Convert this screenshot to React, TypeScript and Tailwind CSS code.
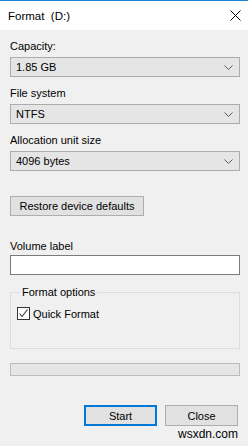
import React from 'react';

const font = { fontFamily: '"Liberation Sans", Arial, sans-serif' };

const Chevron: React.FC = () => (
  <svg width="9" height="5" viewBox="0 0 9 5" className="shrink-0">
    <path d="M0.5 0.5 L4.5 4.5 L8.5 0.5" fill="none" stroke="#5a5a5a" strokeWidth="1" />
  </svg>
);

const Combo: React.FC<{ value: string }> = ({ value }) => (
  <div className="flex items-center justify-between h-[20px] pl-[5px] pr-[6px] bg-[#e5e5e5] border border-[#acacac] text-black">
    <span>{value}</span>
    <Chevron />
  </div>
);

const Label: React.FC<{ children: React.ReactNode }> = ({ children }) => (
  <div className="h-[16px] leading-[16px] mb-[3px] text-black">{children}</div>
);

export default function App() {
  return (
    <div className="w-[248px] h-[446px] flex flex-col bg-[#f0f0f0] text-[11px] leading-[16px] overflow-hidden" style={font}>
      <header className="flex-none h-[30px] border-t border-[#1883d7] bg-white flex items-center justify-between pl-[8px] pr-[8px]">
        <span className="text-[11.5px] text-black whitespace-pre">Format  (D:)</span>
        <svg width="11" height="11" viewBox="0 0 11 11" className="mr-[-1px]">
          <path d="M0.5 0.5 L10.5 10.5 M10.5 0.5 L0.5 10.5" stroke="#000" strokeWidth="1" />
        </svg>
      </header>

      <div className="flex-1 flex flex-col pl-[10px] pr-[8px] pt-[8px]">
        <Label>Capacity:</Label>
        <Combo value="1.85 GB" />
        <div className="h-[8px]" />
        <Label>File system</Label>
        <Combo value="NTFS" />
        <div className="h-[8px]" />
        <Label>Allocation unit size</Label>
        <Combo value="4096 bytes" />

        <button className="mt-[25px] w-[134px] h-[20px] bg-[#e1e1e1] border border-[#adadad] text-black text-[11px]">
          Restore device defaults
        </button>

        <div className="mt-[22px] h-[16px] mb-[1px] text-black">Volume label</div>
        <div className="h-[20px] bg-white border border-[#7a7a7a]" />

        <fieldset className="mt-[9px] border border-[#dcdcdc] pl-[6px] pb-[28px] h-[65px]">
          <legend className="ml-[3px] px-[2px] text-black leading-[16px]">Format options</legend>
          <label className="flex items-center mt-[7px] h-[13px]">
            <span className="w-[13px] h-[13px] border border-[#333] bg-white flex items-center justify-center">
              <svg width="11" height="11" viewBox="0 0 11 11">
                <path d="M1.5 5.5 L4 8.5 L9.5 1.5" fill="none" stroke="#333" strokeWidth="1.1" />
              </svg>
            </span>
            <span className="ml-[3px] text-black">Quick Format</span>
          </label>
        </fieldset>

        <div className="mt-[14px] h-[13px] bg-[#e6e6e6] border border-[#bcbcbc]" />

        <div className="mt-[29px] flex justify-end gap-[8px] pr-[2px]">
          <button className="w-[73px] h-[21px] bg-[#e1e1e1] border-2 border-[#0078d7] text-black text-[11px]">
            Start
          </button>
          <button className="w-[73px] h-[21px] bg-[#e1e1e1] border border-[#adadad] text-black text-[11px]">
            Close
          </button>
        </div>

        <div className="text-right pr-[2px] text-[12px] leading-[16px] text-black">wsxdn.com</div>
      </div>
    </div>
  );
}
